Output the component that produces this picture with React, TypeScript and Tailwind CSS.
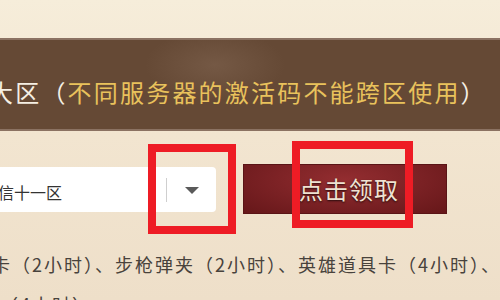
import React from 'react';

const cjk = "font-['Noto_Sans_CJK_SC','Noto_Sans',sans-serif]";

const App = () => {
  return (
    <div
      className={`relative w-[500px] h-[300px] overflow-hidden bg-[linear-gradient(180deg,#f6edda_0%,#f2e5d0_45%,#eedfc9_100%)] ${cjk}`}
    >
      <div className="h-[38px]" />

      {/* notice band */}
      <div className="h-[93px] border-y-2 border-[#8b7262] bg-[#654935] bg-[radial-gradient(ellipse_70px_35px_at_215px_25px,rgba(140,112,92,0.4),transparent)] pt-[40px]">
        <p className="-ml-[11px] whitespace-nowrap text-[24px] leading-[24px] tracking-[2.2px] text-[#f5efe4]">
          大区（<span className="text-[#e9c25c]">不同服务器的激活码不能跨区使用</span>）
        </p>
      </div>

      {/* server select + claim */}
      <div className="mt-[33px] flex h-[50px] items-center">
        <div className="-ml-[11px] flex h-[45px] w-[227px] items-center rounded-[4px] bg-white">
          <span className="-ml-[7px] mt-[6px] whitespace-nowrap text-[16px] text-[#333]">电信十一区</span>
          <span className="ml-auto mt-[2px] h-[24px] w-px bg-[#cfcfcf]" />
          <svg className="ml-[18px] mr-[17px] mt-[3px]" width="14" height="7" viewBox="0 0 14 7">
            <path d="M0 0h14L7 7z" fill="#5a5a5a" />
          </svg>
        </div>
        <button className="ml-[27px] flex h-[50px] w-[204px] items-center justify-center border border-[#5a1416] bg-[radial-gradient(ellipse_at_50%_30%,#932d30_0%,#7a2124_55%,#661719_100%)] pl-[8px] text-[24px] leading-none tracking-[1px] text-[#efe2d2] [text-shadow:0_1px_2px_rgba(0,0,0,0.7)]">
          点击领取
        </button>
      </div>

      {/* reward list */}
      <p className="-ml-[8px] mt-[30px] w-[520px] text-[18px] leading-[40px] tracking-[2px] text-[#48423c]">
        卡（2小时）、步枪弹夹（2小时）、英雄道具卡（4小时）、
        <br />
        <span className="ml-[8px]">（4小时）</span>
      </p>

      {/* annotation boxes */}
      <div className="absolute left-[148px] top-[144px] h-[90px] w-[88px] border-[8px] border-[#ee1c25]" />
      <div className="absolute left-[292px] top-[141px] h-[87px] w-[121px] border-[8px] border-[#ee1c25]" />
    </div>
  );
};

export default App;
